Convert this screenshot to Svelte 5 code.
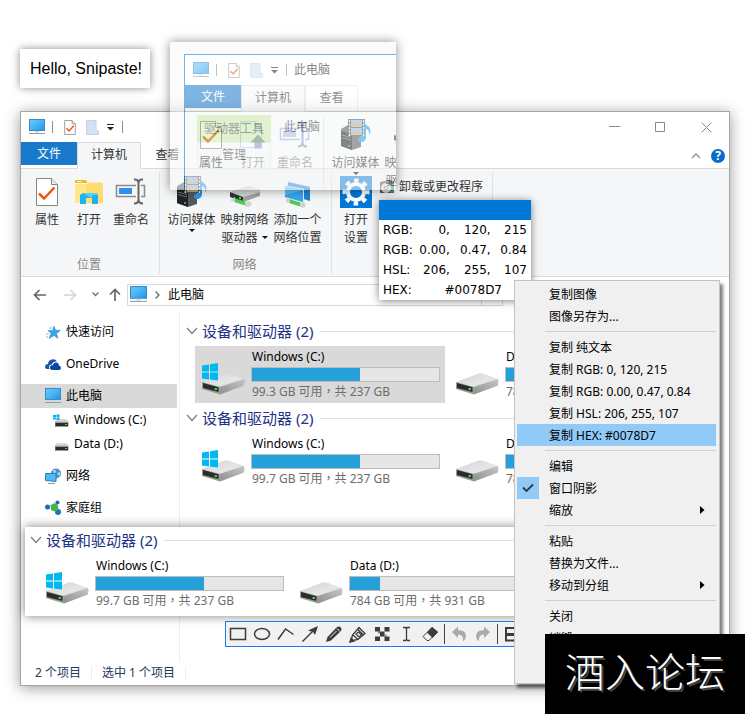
<script>
  const drives = (free) => [
    { name: 'Windows (C:)', info: `${free} GB 可用，共 237 GB`, used: 58, system: true },
    { name: 'Data (D:)', info: '784 GB 可用，共 931 GB', used: 16, system: false }
  ];

  const places = [
    { label: '快速访问', icon: 'star' },
    { label: 'OneDrive', icon: 'cloud' },
    { label: '此电脑', icon: 'pc', current: true },
    { label: 'Windows (C:)', icon: 'miniwin', sub: true },
    { label: 'Data (D:)', icon: 'mini', sub: true },
    { label: '网络', icon: 'network' },
    { label: '家庭组', icon: 'home' }
  ];

  const colors = [
    { label: 'RGB:', values: ['0,', '120,', '215'] },
    { label: 'RGB:', values: ['0.00,', '0.47,', '0.84'] },
    { label: 'HSL:', values: ['206,', '255,', '107'] }
  ];

  const menu = [
    [{ label: '复制图像' }, { label: '图像另存为...' }],
    [
      { label: '复制 纯文本' },
      { label: '复制 RGB: 0, 120, 215' },
      { label: '复制 RGB: 0.00, 0.47, 0.84' },
      { label: '复制 HSL: 206, 255, 107' },
      { label: '复制 HEX: #0078D7', active: true }
    ],
    [{ label: '编辑' }, { label: '窗口阴影', checked: true }, { label: '缩放', more: true }],
    [{ label: '粘贴' }, { label: '替换为文件...' }, { label: '移动到分组', more: true }],
    [{ label: '关闭' }, { label: '销毁' }]
  ];

  const tools = [
    ['rect', '矩形'], ['ellipse', '椭圆'], ['line', '折线'], ['arrow', '箭头'], ['pencil', '铅笔'],
    ['marker', '马克笔'], ['mosaic', '马赛克'], ['text', '文字'], ['eraser', '橡皮擦'], null,
    ['undo', '撤销'], ['redo', '重做'], null, ['save', '保存']
  ];
</script>

{#snippet pc(w, h)}
  <svg width={w} height={h} viewBox="0 0 16 16">
    <defs>
      <linearGradient id="scr" x1="0" y1="0" x2="1" y2="1">
        <stop offset="0" stop-color="#6cc8fb" /><stop offset=".5" stop-color="#48b3f6" /><stop offset="1" stop-color="#1f93e6" />
      </linearGradient>
    </defs>
    <rect x=".5" y=".5" width="15" height="11" fill="url(#scr)" stroke="#3c8cc4" />
    <path d="M6 12h4v1.5H6z" fill="#c9d3de" />
    <path d="M0 14.5h16" stroke="#8b9cb4" />
  </svg>
{/snippet}

{#snippet doc(w, h)}
  <svg width={w} height={h} viewBox="0 0 22 28">
    <path d="M1 1h14l6 6v20H1z" fill="#fff" stroke="#8a8a8a" stroke-width="1.500" />
    <path d="M15 1v6h6" fill="#eee" stroke="#8a8a8a" stroke-width="1.500" />
    <path d="M4.500 15.500l5 5L18 10.500" fill="none" stroke="#e8590c" stroke-width="2.800" />
  </svg>
{/snippet}

{#snippet disk(system)}
  <svg width="44" height="34" viewBox="0 0 44 34">
    <defs>
      <linearGradient id="dtop" x1="0" y1="0" x2="1" y2="1">
        <stop offset="0" stop-color="#d2d2d3" /><stop offset=".6" stop-color="#e6e6e8" /><stop offset="1" stop-color="#cfcfd1" />
      </linearGradient>
      <linearGradient id="dside" x1="0" y1="1" x2="1" y2="0">
        <stop offset="0" stop-color="#8f8f90" /><stop offset="1" stop-color="#c6c6c8" />
      </linearGradient>
    </defs>
    <path d="M18 32l24-8 2-3v-3L20 30z" fill="#000" opacity=".1" />
    <path d="M1 20l22.500-8.500q2-.5 4 0L43 17v2L19 25.500z" fill="url(#dtop)" />
    <path d="M18.500 25L43 17v6.500L19 32.500z" fill="url(#dside)" />
    <path d="M1 20l18 5v7.500L1 27z" fill="#9b9b9b" />
    <path d="M2 21l15.500 4.300v4.700L2 26z" fill="#2b2b2b" />
    <rect x="13.500" y="26" width="2.500" height="2" fill="#2ee52e" />
    {#if system}
      <path d="M1 3.500l7-1V9.500H1zM9 2.300L17 1v8.500H9zM1 10.500h7v7l-7-1zM9 10.500h8V18.500l-8-1z" fill="#00b9f2" />
    {/if}
  </svg>
{/snippet}

{#snippet big(name)}
  <svg width="32" height="32" viewBox="0 0 32 32">
    {#if name === 'props'}
      <path d="M5.500 2.500h15l6 6v21h-21z" fill="#fff" stroke="#858585" />
      <path d="M20.500 2.500v6h6" fill="#eee" stroke="#858585" />
      <path d="M8 17.500l5 5 10.500-11" fill="none" stroke="#f0560c" stroke-width="2.500" />
    {:else if name === 'folder'}
      <path d="M2 5q0-1 1-1h10l1.500 3H2z" fill="#f7b520" />
      <path d="M4 5h5v1H4z" fill="#fff3b0" />
      <path d="M2 8h12l2-1.500h13q1 0 1 1V27H2z" fill="#ffdc70" />
      <path d="M2 8h11v19H2z" fill="#ffe68a" />
      <path d="M7 28v-9l3-2h13l2 2v9h-6v-6h-6v6z" fill="#1db4e9" />
      <path d="M10 17h13l2 2h-5l-2 3z" fill="#5ccff5" />
    {:else if name === 'open'}
      <path d="M3.500 2.500h15l6 6v20h-21z" fill="#f5f7fb" stroke="#b9c4dc" />
      <path d="M18.500 2.500v6h6" fill="#e5eaf4" stroke="#b9c4dc" />
      <path d="M21 15.500l7.500 8H24.500v6h-7v-6h-4z" fill="#8797be" />
    {:else if name === 'rename' || name === 'renameoff'}
      {@const off = name === 'renameoff'}
      <path d="M21 9.500H1.500v11H21M26 9.500h3.500v11H26" fill="none" stroke={off ? '#9db0da' : '#8a8a8a'} stroke-width="1.500" />
      <path d="M4 12h13v6H4z" fill={off ? '#aabbe0' : '#2f8fee'} />
      <path d="M19 3.500q4.500-.5 4.500 4v16q0 4-4.500 4M28 3.500q-4.500-.5-4.500 4v16q0 4 4.500 4" fill="none" stroke={off ? '#8497c4' : '#666'} stroke-width="2" />
    {:else if name === 'media'}
      <path d="M1 10l9-5 11 3v20l-9 3-11-4z" fill="#55585c" />
      <path d="M1 12l11 3v16L1 27z" fill="#1f2124" />
      <path d="M2 16l9 2.500M2 18.500l9 2.500" stroke="#73787e" />
      <circle cx="9" cy="27" r="1" fill="#47b5ef" />
      <path d="M8 0h17v17H8z" fill="#54575b" />
      <path d="M11 1h11v7H11zM11 9h11v7H11z" fill="#8cb4e8" />
      <path d="M11 7l3-3 3 2 2-2 3 3v1H11zM11 15l3-3 3 2 2-2 3 3v1H11z" fill="#c9a46a" />
      <path d="M9.500 1v16M23.500 1v16" stroke="#fff" stroke-dasharray="2 1.500" />
      <path d="M24 1q1 5 5 7 3 4 0 8 1-5-3-6v9q-1 4-5 4-4-.5-3-3.500 2-3 6-2.500z" fill="#2398e8" />
    {:else if name === 'map'}
      <path d="M1 16l18-6q2 0 12 3v3l-17 5z" fill="#d5d5d7" />
      <path d="M14 21l17-5v4l-17 6z" fill="#a2a2a4" />
      <path d="M1 16l13 5v5L1 21z" fill="#343536" />
      <rect x="10" y="21" width="2" height="2" fill="#36e536" />
      <path d="M5 22l13 4v4L5 26z" fill="#4fcc52" />
      <path d="M2 23l4-2v5l-4-1zM16 26l5-1 2 3-3 3-4-1z" fill="#cfd6d0" />
    {:else if name === 'netloc'}
      <path d="M5 5l22 5v15L5 19z" fill="#dfe9f2" />
      <path d="M6 6l22 5v14L6 18z" fill="#1f86d0" />
      <path d="M2 9l20 4v14L2 22z" fill="#e6eff6" />
      <path d="M3 10l18 4v12L3 21z" fill="#35a8f2" />
      <path d="M3 10l18 4-18 5z" fill="#5fc0f8" />
      <path d="M7 23l13 4v4L7 27z" fill="#4fcc52" />
      <path d="M4 23l4-1v5l-4-1zM18 27l4-1 2 3-2 3-4-1z" fill="#cfd6d0" />
    {:else if name === 'gear'}
      <path d="M0 0h32v32H0z" fill="#0078d7" />
      <circle cx="16" cy="16" r="8" fill="none" stroke="#fff" stroke-width="4" />
      <circle cx="16" cy="16" r="11.500" fill="none" stroke="#fff" stroke-width="4" stroke-dasharray="4.500 4.532" stroke-dashoffset="2.250" />
    {/if}
  </svg>
{/snippet}

{#snippet side(name)}
  {#if name === 'pc'}
    {@render pc(16, 16)}
  {:else}
    <svg width="16" height="16" viewBox="0 0 16 16">
      {#if name === 'star'}
        <path d="M9 2l1.500 4 5 .5-4 3 1.500 5-4-3-5 3 2-5-3-3H7.500z" fill="#3ba4ec" stroke="#2a86cd" stroke-width=".5" />
        <path d="M4 4h3M1 10h2.500M1 13h2" stroke="#79b9e8" />
      {:else if name === 'cloud'}
        <path d="M0 11q0-3 3-3 0-4 4-4.500 3-1 5 2-4-.5-5 3-3 0-3 3l.5 1.500H2q-2 0-2-2z" fill="#1f55a5" />
        <path d="M5 11.500Q5 9 8 9q.5-3 3.500-2.500Q14 7 14 9.500q2 .5 2 2.500t-2 2H7.500Q5 14 5 11.500z" fill="#0a45a8" />
      {:else if name === 'miniwin' || name === 'mini'}
        <path d="M2 9.500L4 7h9l2.500 2.500z" fill="#dadada" />
        <path d="M2 9.500h13.500V15H2z" fill="#9a9a9a" />
        <path d="M2.500 11h12.500v3H2.500z" fill="#2c2c2c" />
        <rect x="12" y="12" width="2" height="1" fill="#31e531" />
        {#if name === 'miniwin'}
          <path d="M0 3h3v2H0zM3.500 2.500h3v2.500h-3zM0 5.500h3v2H0zM3.500 5.500h3V8h-3z" fill="#00b4ef" />
        {/if}
      {:else if name === 'network'}
        <circle cx="11" cy="5.500" r="5" fill="#4b92c6" />
        <path d="M8 2q3-1 3 1t-2 3zM12 5l3-1q1 3-1 4z" fill="#a8d5ee" />
        <path d="M.5 5.500h10.500v8L.5 12.500z" fill="#50b7f5" stroke="#2a83bf" />
        <path d="M3 15.500h7" stroke="#8797ad" />
      {:else if name === 'home'}
        <path d="M3 7l9-5M12 2v11M9 8l4 5" stroke="#8bb2c8" />
        <circle cx="2.500" cy="7" r="2.500" fill="#1c6db5" />
        <circle cx="12.500" cy="2.500" r="2" fill="#1c6db5" />
        <circle cx="13" cy="12" r="3" fill="#1f75bd" />
        <circle cx="9.500" cy="7.500" r="3.800" fill="#46b649" />
      {/if}
    </svg>
  {/if}
{/snippet}

{#snippet tool(name)}
  <svg width="18" height="18" viewBox="0 0 18 18" fill="none" stroke="#3c3c3c" stroke-width="1.500">
    {#if name === 'rect'}
      <rect x="1.500" y="3.500" width="15" height="11" />
    {:else if name === 'ellipse'}
      <ellipse cx="9" cy="9" rx="7.500" ry="5.500" />
    {:else if name === 'line'}
      <path d="M1 14.500L8.500 4 16.500 9.500" />
    {:else if name === 'arrow'}
      <path d="M1.500 16.500L13 5" /><path d="M17 1l-3 9-2-3-5-1.500z" fill="#3c3c3c" stroke="none" />
    {:else if name === 'pencil'}
      <path d="M1 17l1.500-5L12 2q2-1 4 .5 1 2 0 3.500L6 15.500z" fill="#3c3c3c" stroke="none" /><path d="M5 12.500l6.500-6.500M12 3.500l3 3" stroke="#f0f0f0" stroke-width="1" />
    {:else if name === 'marker'}
      <path d="M2 16l1.500-6L10 2.500l6 6-7 6z" stroke-width="1.300" /><path d="M4 10l4.500 4M8.500 4l6 6M7 9l3 3 2.500-2-3-3z" stroke-width="1.300" /><path d="M1 17l4-1-3-2.500z" fill="#3c3c3c" />
    {:else if name === 'mosaic'}
      <path d="M2 2h5v4.500H2zM11.500 2h5v4.500h-5zM7 6.500h4.500v5H7zM2 11.500h5V16H2zM11.500 11.500h5V16h-5z" fill="#3c3c3c" stroke="none" />
      <path d="M5 6.500h2v2H5zM11.500 9.500h2v2h-2z" fill="#3c3c3c" stroke="none" opacity=".6" />
    {:else if name === 'text'}
      <path d="M6 2.500h2.500l1 1 1-1H13M6 15.500h2.500l1-1 1 1H13M9.500 3.500v11" stroke-width="1.300" />
    {:else if name === 'eraser'}
      <path d="M2 11.500L11 2.500l5.500 4.500-8.500 8.500H6z" stroke-width="1" /><path d="M6 7.500l5-5.500 6 5-5.500 6z" fill="#3c3c3c" stroke="none" />
    {:else if name === 'undo'}
      <path d="M2 7l6-5.500v3.500q8 0 8 6 0 3-3 5.500 1-7-5-7v3.500z" fill="#aaa" stroke="none" />
    {:else if name === 'redo'}
      <path d="M16 7l-6-5.500v3.500q-8 0-8 6 0 3 3 5.500-1-7 5-7v3.500z" fill="#aaa" stroke="none" />
    {:else if name === 'save'}
      <path d="M3 3h12l1.500 1.500v11H3z" stroke-width="2" /><path d="M3 8h13v3H3z" fill="#3c3c3c" stroke="none" />
    {/if}
  </svg>
{/snippet}

{#snippet item(icon, lines, drop, off)}
  <button class="item" class:wide={lines[0].length > 3} class:off>
    {@render big(icon)}
    {#each lines as line, i}
      <span>{line}{#if drop && i > 0}<i class="tri inline"></i>{/if}</span>
    {/each}
    {#if drop && lines.length === 1}<i class="tri"></i>{/if}
  </button>
{/snippet}

{#snippet head(ghost)}
  <header class="title">
    {@render pc(16, 16)}
    <i class="bar"></i>
    {@render doc(12, 15)}
    <svg class="dir" width="13" height="15" viewBox="0 0 13 15">
      <path d="M.5.500h9.500v9l2.500 1.500v3.500H.5z" fill="#d4e1f3" stroke="#c3d2ea" />
    </svg>
    <svg width="7" height="7" viewBox="0 0 7 7"><path d="M0 .5h7" stroke="#222" /><path d="M0 3h7L3.500 6.500z" fill="#222" /></svg>
    <i class="bar"></i>
    {#if ghost}
      <span class="name">此电脑</span>
    {:else}
      <span class="kit">驱动器工具</span>
      <span class="name">此电脑</span>
      <div class="controls">
        <button aria-label="最小化"><svg width="11" height="11" viewBox="0 0 11 11"><path d="M0 4.500h11" stroke="#888" /></svg></button>
        <button aria-label="最大化"><svg width="11" height="11" viewBox="0 0 11 11"><path d="M.5.500h9v9h-9z" fill="none" stroke="#888" /></svg></button>
        <button aria-label="关闭"><svg width="11" height="11" viewBox="0 0 11 11"><path d="M.5.500l10 10M10.500.500l-10 10" stroke="#888" /></svg></button>
      </div>
    {/if}
  </header>
  <nav class="tabs" class:ghost>
    <button class="file">文件</button>
    <button class="tab on">计算机</button>
    <button class="tab view">查看</button>
    {#if !ghost}
      <button class="tab manage">管理</button>
      <div class="help">
        <svg width="10" height="6" viewBox="0 0 10 6"><path d="M1 5l4-4 4 4" fill="none" stroke="#999" stroke-width="1.500" /></svg>
        <button aria-label="帮助">?</button>
      </div>
    {/if}
  </nav>
  <section class="ribbon">
    <div class="group">
      <div class="items">
        {@render item('props', ['属性'], false, false)}
        {@render item(ghost ? 'open' : 'folder', ['打开'], false, ghost)}
        {@render item(ghost ? 'renameoff' : 'rename', ['重命名'], false, ghost)}
      </div>
      <span class="caption">位置</span>
    </div>
    <div class="group">
      <div class="items">
        {@render item('media', ['访问媒体'], true, false)}
        {@render item('map', ['映射网络', '驱动器'], true, false)}
        {@render item('netloc', ['添加一个', '网络位置'], false, false)}
      </div>
      <span class="caption">网络</span>
    </div>
    <div class="group last">
      <div class="items">
        {@render item('gear', ['打开', '设置'], false, false)}
        <button class="small">
          <svg width="16" height="16" viewBox="0 0 16 16">
            <path d="M1 3l9-2 5 1v12H1z" fill="#4d5257" /><path d="M11 4h4v10h-4z" fill="#4c8467" />
            <circle cx="7" cy="9" r="5" fill="#d9dde0" /><circle cx="7" cy="9" r="2" fill="#777" /><circle cx="7" cy="9" r="1" fill="#fff" />
          </svg>
          卸载或更改程序
        </button>
      </div>
    </div>
  </section>
{/snippet}

{#snippet driveGroup(free, selected)}
  <section class="drives">
    <h2>
      <svg width="12" height="8" viewBox="0 0 12 8"><path d="M1 1l5 5.500L11 1" fill="none" stroke="#7c7c7c" stroke-width="1.200" /></svg>
      设备和驱动器 (2)
    </h2>
    <div class="tiles">
      {#each drives(free) as d, i}
        <article class="tile" class:selected={selected && i === 0}>
          {@render disk(d.system)}
          <div class="meta">
            <strong>{d.name}</strong>
            <div class="gauge"><div style="width: {d.used}%"></div></div>
            <small>{d.info}</small>
          </div>
        </article>
      {/each}
    </div>
  </section>
{/snippet}

<main>
  <div class="note">Hello, Snipaste!</div>

  <div class="window explorer">
    {@render head(false)}
    <div class="nav">
      <button aria-label="后退"><svg width="14" height="12" viewBox="0 0 14 12"><path d="M13 6H1.500M6.500 1l-5 5 5 5" fill="none" stroke="#666" stroke-width="1.700" /></svg></button>
      <button aria-label="前进"><svg width="14" height="12" viewBox="0 0 14 12"><path d="M1 6h11.500M7.500 1l5 5-5 5" fill="none" stroke="#d4d4d4" stroke-width="1.700" /></svg></button>
      <button class="tiny" aria-label="最近"><svg width="7" height="5" viewBox="0 0 7 5"><path d="M.5.500l3 3 3-3" fill="none" stroke="#777" stroke-width="1.500" /></svg></button>
      <button class="tiny" aria-label="向上"><svg width="12" height="14" viewBox="0 0 12 14"><path d="M6 13V1.500M1 6.500l5-5 5 5" fill="none" stroke="#666" stroke-width="1.700" /></svg></button>
      <div class="address">
        {@render pc(17, 17)}
        <svg width="5" height="8" viewBox="0 0 5 8"><path d="M.500.500L4 4 .500 7.500" fill="none" stroke="#666" stroke-width="1.300" /></svg>
        <span>此电脑</span>
      </div>
    </div>
    <div class="body">
      <aside>
        {#each places as p}
          <a href="#top" class:sub={p.sub} class:current={p.current}>{@render side(p.icon)}{p.label}</a>
        {/each}
      </aside>
      <div class="list">
        {@render driveGroup('99.3', true)}
        {@render driveGroup('99.7', false)}
      </div>
    </div>
    <footer><span>2 个项目</span><span>选中 1 个项目</span></footer>
  </div>

  <div class="snip">
    <div class="window inner">{@render head(true)}</div>
  </div>

  <div class="strip">{@render driveGroup('99.7', false)}</div>

  <div class="toolbar">
    {#each tools as t}
      {#if t}
        <button aria-label={t[1]}>{@render tool(t[0])}</button>
      {:else}
        <i></i>
      {/if}
    {/each}
  </div>

  <div class="picker">
    <div class="swatch"></div>
    <table>
      <tbody>
        {#each colors as c}
          <tr><th scope="row">{c.label}</th>{#each c.values as v}<td>{v}</td>{/each}</tr>
        {/each}
        <tr><th scope="row">HEX:</th><td class="hex" colspan="3">#0078D7</td></tr>
      </tbody>
    </table>
  </div>

  <div class="menu" role="menu">
    {#each menu as section, s}
      {#if s > 0}<hr />{/if}
      {#each section as m}
        <button role="menuitem" class:active={m.active}>
          <span class="mark" class:checked={m.checked}>
            {#if m.checked}<svg width="12" height="10" viewBox="0 0 12 10"><path d="M1 4.500L4.500 8 11 1.500" fill="none" stroke="#2b3a4a" stroke-width="1.800" /></svg>{/if}
          </span>
          <span class="text">{m.label}</span>
          {#if m.more}<svg width="5" height="8" viewBox="0 0 5 8"><path d="M0 0l4.500 4L0 8z" /></svg>{/if}
        </button>
      {/each}
    {/each}
  </div>

  <div class="brand">酒入论坛</div>
</main>

<style>
  :global(body) { margin: 0; background: #fff; }
  main {
    position: relative;
    min-height: 100vh;
    overflow: hidden;
    font: 12px/18px "Noto Sans", "Noto Sans CJK SC", sans-serif;
    color: #000;
  }
  main :global(*) { box-sizing: border-box; }
  svg { display: block; flex: none; }
  button { font: inherit; color: inherit; padding: 0; margin: 0; border: 0; background: none; }

  .note {
    position: absolute;
    left: 20px;
    top: 49px;
    padding: 10px 8px 10px 10px;
    background: #fff;
    box-shadow: 0 0 8px rgba(0, 0, 0, .45);
    font: 16px/19px "Liberation Sans", sans-serif;
  }

  .window { background: #fff; border: 1px solid #a5a5a5; }
  .explorer { position: absolute; left: 20px; right: 20px; top: 111px; box-shadow: 0 2px 14px rgba(0, 0, 0, .4); }

  .title { display: flex; align-items: center; height: 30px; padding-left: 8px; }
  .title .bar { width: 1px; height: 12px; background: #8c8c8c; margin: 0 11px 0 7px; }
  .title .bar:nth-of-type(2) { margin: 0 7px 0 8px; }
  .title .dir { margin: 0 8px 0 10px; }
  .kit { align-self: stretch; width: 74px; margin: 3px 13px 0 67px; background: #c5ec9f; line-height: 27px; text-align: center; color: #333; }
  .title .name { color: #222; }
  .controls { display: flex; margin-left: auto; }
  .controls button { display: grid; place-items: center; width: 46px; height: 28px; }

  .tabs { display: flex; height: 27px; background: linear-gradient(#d9dadb, #d9dadb) bottom / 100% 1px no-repeat; }
  .file { width: 56px; height: 23px; background: #1979ca; color: #fff; }
  .tab { border: 1px solid transparent; color: #333; padding-bottom: 2px; }
  .on { width: 64px; background: #f5f6f7; border-color: #dadbdc; border-bottom-color: #f5f6f7; }
  .view { width: 53px; }
  .ghost .view { border-color: #e2e3e4; border-bottom-color: #dadbdc; }
  .manage { width: 74px; margin-left: 3px; background: #fbfefa; border-color: #e4ecdd; }
  .help { display: flex; align-items: center; gap: 10px; margin: 0 4px 0 auto; }
  .help button { width: 14px; height: 14px; border-radius: 7px; background: #0a6cc8; color: #fff; font-weight: 700; line-height: 14px; }

  .ribbon { display: flex; height: 108px; background: #f5f6f7; border-bottom: 1px solid #dadbdc; color: #333; }
  .group { display: flex; flex-direction: column; justify-content: space-between; margin: 3px 0 2px; padding: 4px 7px 0 5px; border-right: 1px solid #e0e1e2; }
  .items { display: flex; align-items: flex-start; }
  .item { display: flex; flex-direction: column; align-items: center; width: 42px; white-space: nowrap; }
  .item svg { margin-bottom: 3px; }
  .item.wide { width: 53px; }
  .item.off { color: #888; }
  .tri { border: 3px solid transparent; border-top-color: #111; border-bottom: 0; }
  .inline { display: inline-block; margin: 0 0 3px 4px; }
  .caption { text-align: center; color: #888; line-height: 18px; }
  .last { padding: 4px 9px 0 3px; }
  .small { display: flex; align-items: center; gap: 4px; height: 22px; padding-left: 2px; white-space: nowrap; }

  .nav { display: flex; align-items: center; height: 35px; padding-left: 4px; }
  .nav button { display: grid; place-items: center; width: 30px; height: 24px; }
  .nav .tiny { width: 20px; }
  .address { display: flex; align-items: center; flex: 1; height: 22px; gap: 8px; margin: 0 226px 0 2px; padding-left: 2px; border: 1px solid #d9d9d9; background: linear-gradient(#d9d9d9, #d9d9d9) right 20px top / 1px 100% no-repeat; }

  .body { display: flex; }
  aside { width: 159px; padding: 8px 2px 142px 0; border-right: 1px solid #eee; }
  aside a { display: flex; align-items: center; gap: 5px; height: 24px; padding-left: 24px; color: inherit; text-decoration: none; white-space: nowrap; }
  aside a:not(.sub) + a:not(.sub), aside .sub + a:not(.sub) { margin-top: 8px; }
  aside .sub { padding-left: 32px; }
  aside .current { background: #d9d9d9; }
  .list { flex: 1; min-width: 0; padding: 8px 9px 0 6px; }

  h2 { display: flex; align-items: center; gap: 4px; height: 22px; margin: 0 0 4px; font-size: 15px; line-height: 20px; font-weight: 400; color: #1e3287; white-space: nowrap; }
  h2::after { content: ""; flex: 1; height: 1px; margin-left: 3px; background: #e0e0e0; }
  .tiles { display: flex; gap: 4px; margin: 0 0 4px 9px; }
  .tile { display: flex; width: 250px; height: 57px; padding: 1px 5px 0 6px; flex: none; }
  .tile > :global(svg) { margin: 15px 6px 0 0; }
  .selected { background: #d9d9d9; }
  .meta { display: flex; flex-direction: column; flex: 1; }
  .meta strong { font-weight: 400; line-height: 20px; padding-left: 1px; }
  .meta small { font: 12px/20px "Noto Sans", "Noto Sans CJK TC", sans-serif; color: #6d6d6d; padding-left: 1px; }
  .gauge { height: 15px; border: 1px solid #bcbcbc; background: #e6e6e6; }
  .gauge div { height: 100%; background: #26a0da; }

  footer { display: flex; align-items: flex-start; height: 23px; padding: 4px 0 0 4px; color: #1e395b; line-height: 14px; }
  footer span { padding: 0 10px; border-right: 1px solid #eee; }

  .snip {
    position: absolute;
    left: 170px;
    top: 42px;
    width: 226px;
    height: 148px;
    overflow: hidden;
    background: #f8f8f8;
    opacity: .55;
    box-shadow: 0 0 10px rgba(0, 0, 0, .8);
  }
  .inner { width: 710px; margin: 12px 0 0 14px; border-color: #0078d7; }

  .strip { position: absolute; left: 25px; right: 55px; top: 527px; padding: 2px 0 0 5px; overflow: hidden; background: #fff; box-shadow: 0 0 10px rgba(0, 0, 0, .5); }

  .toolbar { position: absolute; left: 225px; top: 621px; display: flex; border: 1px solid #1a7ae6; background: #f1f1f1; }
  .toolbar button { display: grid; place-items: center; width: 24px; height: 24px; }
  .toolbar i { width: 1px; margin: 2px; background: #444; }

  .picker { position: absolute; left: 379px; top: 200px; width: 152px; background: #fff; box-shadow: 0 1px 8px rgba(0, 0, 0, .5); }
  .swatch { height: 20px; background: #0078d7; }
  table { width: 100%; border-collapse: collapse; font: 12px/19px "DejaVu Sans", sans-serif; }
  th { width: 34px; padding: 1px 0 0 4px; font-weight: 400; text-align: left; }
  td { padding: 1px 4px 0 0; text-align: right; }
  td.hex { padding-right: 29px; }

  .menu {
    position: absolute;
    left: 514px;
    top: 280px;
    width: 206px;
    padding: 2px 3px 34px 2px;
    border: 1px solid #c3c3c3;
    background: #f0f0f0;
    box-shadow: 3px 4px 3px rgba(0, 0, 0, .5);
  }
  .menu button { display: flex; align-items: center; width: 100%; height: 22px; text-align: left; }
  .menu .active { background: #91c9f7; }
  .mark { display: grid; place-items: center; width: 22px; height: 22px; margin-right: 10px; }
  .checked { background: #91c9f7; }
  .text { flex: 1; padding-top: 2px; white-space: nowrap; }
  .menu button > svg { margin-right: 11px; }
  hr { height: 1px; margin: 4px 0 4px 28px; border: 0; background: #d0d0d0; }

  .brand {
    position: absolute;
    right: 5px;
    top: 634px;
    width: 200px;
    padding-bottom: 8px;
    background: #000;
    color: #fff;
    text-align: center;
    font: 300 40px/72px "Noto Sans CJK SC", sans-serif;
    text-shadow: 2px 2px 0 #444;
  }
</style>
